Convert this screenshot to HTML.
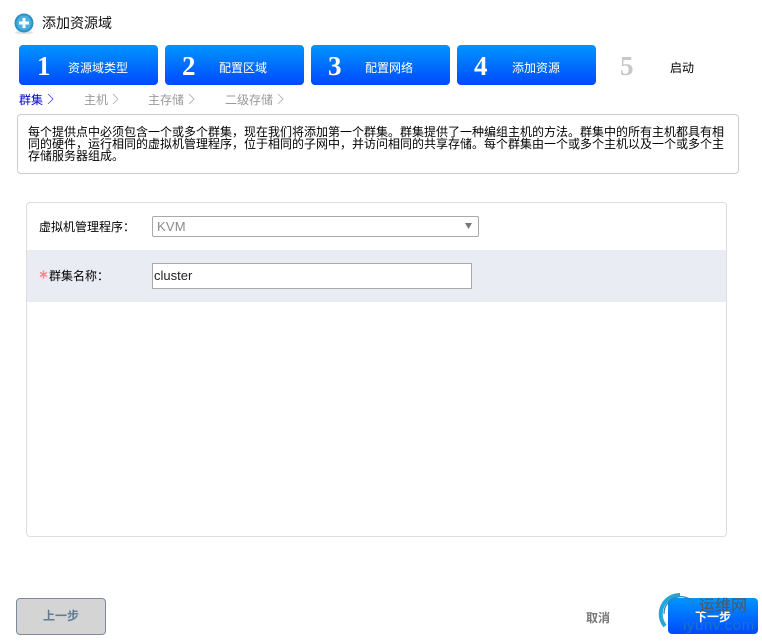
<!DOCTYPE html>
<html lang="zh">
<head>
<meta charset="utf-8">
<style>
html,body{margin:0;padding:0;background:#fff;}
body{width:762px;height:641px;position:relative;overflow:hidden;font-family:"Liberation Sans","WenQuanYi Zen Hei","Noto Sans CJK SC",sans-serif;font-size:12px;color:#000;}
.a{position:absolute;white-space:nowrap;}
.step{position:absolute;top:45px;width:139px;height:40px;border-radius:4px;background:linear-gradient(#0095ff,#0049ff);color:#fff;}
.num{position:absolute;top:6px;font:bold 27px/30px "Liberation Serif",serif;color:#fff;}
.lbl{position:absolute;top:16px;font-size:12px;line-height:14px;color:#fff;}
.crumb{position:absolute;top:93px;font-size:12px;line-height:14px;color:#999;white-space:nowrap;}
.chev{position:absolute;top:93px;}
</style>
</head>
<body>
<svg class="a" style="left:14px;top:12px" width="20" height="23" viewBox="0 0 20 23">
<ellipse cx="10" cy="20.500" rx="9" ry="1.800" fill="#e2e2e2"/>
<circle cx="10" cy="11" r="9.500" fill="#2b8fc6"/>
<circle cx="10" cy="11" r="7.500" fill="#4cb0dd"/>
<path d="M10 6v10M5 11h10" stroke="#fff" stroke-width="3"/>
</svg>
<div class="a" style="left:42px;top:15px;font-size:14px;line-height:17px;color:#111">添加资源域</div>

<div class="step" style="left:19px"><span class="num" style="left:18px">1</span><span class="lbl" style="left:49px">资源域类型</span></div>
<div class="step" style="left:165px"><span class="num" style="left:17px">2</span><span class="lbl" style="left:54px">配置区域</span></div>
<div class="step" style="left:311px"><span class="num" style="left:17px">3</span><span class="lbl" style="left:54px">配置网络</span></div>
<div class="step" style="left:457px"><span class="num" style="left:17px">4</span><span class="lbl" style="left:55px">添加资源</span></div>
<span class="num" style="left:620px;top:51px;color:#c8c8c8">5</span>
<div class="a" style="left:670px;top:61px;line-height:14px">启动</div>

<div class="crumb" style="left:19px;color:#0000d8">群集</div>
<svg class="chev" style="left:47px" width="7" height="12"><path d="M1 1l5 5-5 5" fill="none" stroke="#4a4ae0" stroke-width="0.800"/></svg>
<div class="crumb" style="left:84px">主机</div>
<svg class="chev" style="left:112px" width="7" height="12"><path d="M1 1l5 5-5 5" fill="none" stroke="#aaa" stroke-width="0.800"/></svg>
<div class="crumb" style="left:148px">主存储</div>
<svg class="chev" style="left:188px" width="7" height="12"><path d="M1 1l5 5-5 5" fill="none" stroke="#aaa" stroke-width="0.800"/></svg>
<div class="crumb" style="left:225px">二级存储</div>
<svg class="chev" style="left:277px" width="7" height="12"><path d="M1 1l5 5-5 5" fill="none" stroke="#aaa" stroke-width="0.800"/></svg>

<div class="a" style="left:17px;top:114px;width:720px;height:58px;border:1px solid #ccc;border-radius:4px"></div>
<div class="a" style="left:28px;top:126px;line-height:12px;font-size:12px;color:#000">每个提供点中必须包含一个或多个群集，现在我们将添加第一个群集。群集提供了一种编组主机的方法。群集中的所有主机都具有相<br>同的硬件，运行相同的虚拟机管理程序，位于相同的子网中，并访问相同的共享存储。每个群集由一个或多个主机以及一个或多个主<br>存储服务器组成。</div>

<div class="a" style="left:26px;top:202px;width:699px;height:333px;border:1px solid #ddd;border-radius:4px"></div>
<div class="a" style="left:27px;top:250px;width:699px;height:52px;background:#e9ecf3"></div>
<div class="a" style="left:39px;top:220px;line-height:14px">虚拟机管理程序：</div>
<div class="a" style="left:152px;top:216px;width:325px;height:19px;border:1px solid #a9a9a9;border-radius:2px;background:#fff"></div>
<div class="a" style="left:157px;top:219px;line-height:15px;color:#8a8a8a;font-size:13px;letter-spacing:.2px">KVM</div>
<svg class="a" style="left:465px;top:222px" width="8" height="8"><path d="M0 1h7l-3.500 6z" fill="#777"/></svg>
<svg class="a" style="left:39px;top:270px" width="9" height="9"><path d="M4.500 0.500v8M1 2.500l7 4M8 2.500l-7 4" stroke="#f58a8a" stroke-width="1.500" fill="none"/></svg>
<div class="a" style="left:49px;top:269px;line-height:14px">群集名称：</div>
<div class="a" style="left:152px;top:263px;width:318px;height:24px;border:1px solid #a9a9a9;background:#fff"></div>
<div class="a" style="left:154px;top:268px;line-height:16px;font-size:13px;color:#222">cluster</div>

<div class="a" style="left:16px;top:598px;width:88px;height:35px;border:1px solid #7b8a9c;border-radius:4px;background:#d4d4d4"></div>
<div class="a" style="left:43px;top:609px;line-height:14px;font-weight:bold;color:#5f7a94">上一步</div>
<div class="a" style="left:586px;top:611px;line-height:14px;font-weight:bold;color:#777">取消</div>

<div class="a" style="left:668px;top:598px;width:90px;height:36px;border-radius:4px;background:linear-gradient(#0095ff,#0049ff)"></div>
<svg class="a" style="left:653px;top:590px" width="60" height="51"><path d="M27 5A19 19 0 0 0 12 36" fill="none" stroke="#25a5d8" stroke-width="4"/><path d="M11 24A17 17 0 0 1 42 14" fill="none" stroke="#3a7fa8" stroke-width="1.200"/></svg>
<div class="a" style="left:695px;top:610px;line-height:14px;font-weight:bold;color:#fff">下一步</div>
<div class="a" style="left:699px;top:598px;font-size:16px;line-height:18px;color:#555">运维网</div>
<div class="a" style="left:683px;top:617px;font-size:15px;line-height:17px;color:#1e6fc8;letter-spacing:.6px">iyunv.com</div>
</body>
</html>
